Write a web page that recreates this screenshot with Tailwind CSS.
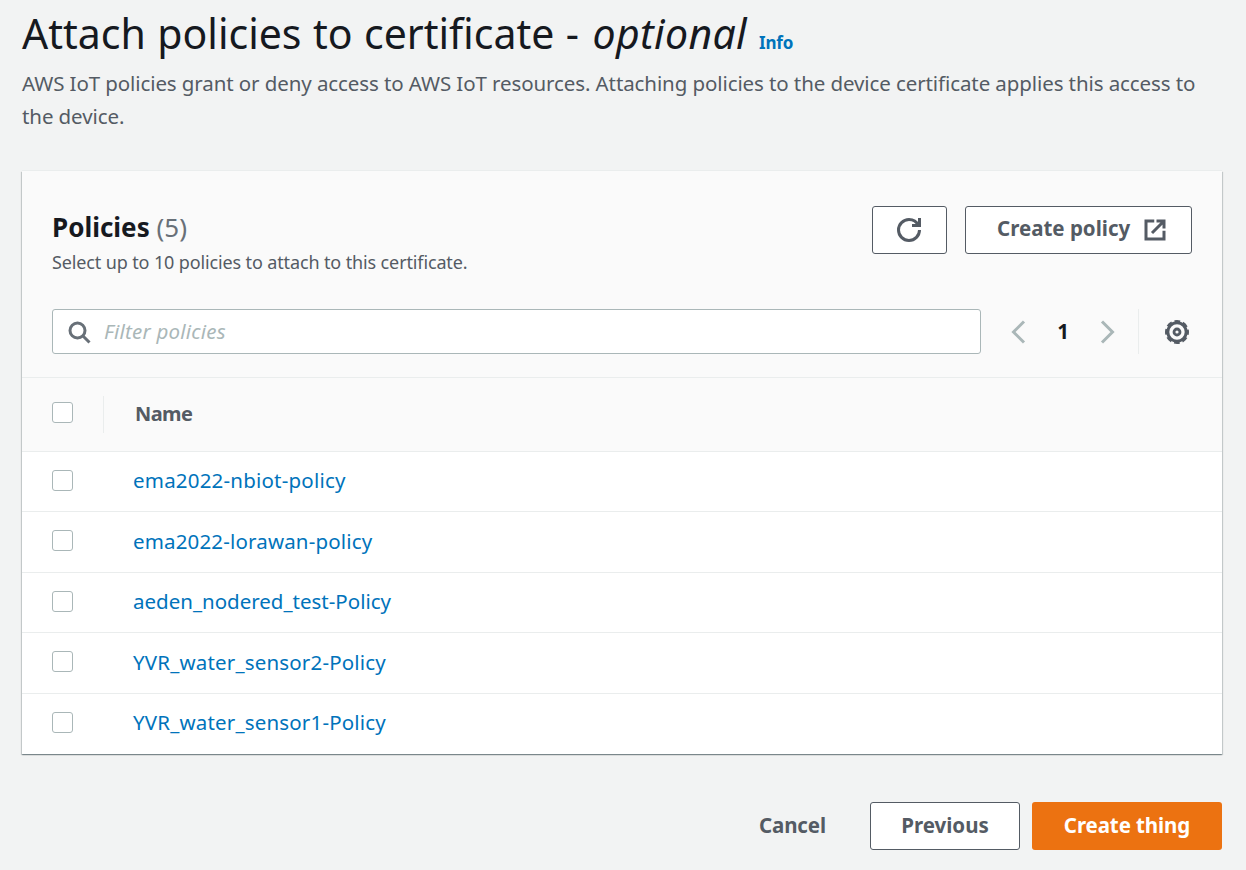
<!DOCTYPE html>
<html lang="en">
<head>
<meta charset="utf-8">
<title>Attach policies to certificate</title>
<script src="https://cdn.jsdelivr.net/npm/@tailwindcss/browser@4"></script>
</head>
<body class="h-[870px] overflow-hidden bg-[#f2f3f3] font-['Noto_Sans',sans-serif] text-[20.5px] text-[#545b64]">
<main class="flex flex-col pl-[22px] pr-6">
  <header class="flex h-[171px] flex-col pt-[6px]">
    <div class="flex h-[61px] items-baseline leading-[54px] whitespace-nowrap">
      <h1 class="text-[41px] text-[#16191f]"><span class="[word-spacing:0.8px]">Attach policies to certificate - </span><i class="ml-[2px] tracking-[0.35px]">optional</i></h1>
      <a class="ml-[12px] text-[17px] font-bold tracking-[-0.2px] text-[#0073bb]">Info</a>
    </div>
    <p class="leading-[33px] tracking-[-0.095px] whitespace-nowrap"><span>AWS IoT policies grant or deny access to AWS IoT resources. Attaching policies to the device certificate applies this access to</span><br><span>the device.</span></p>
  </header>

  <section class="flex h-[583px] flex-col bg-white shadow-[0_1px_1px_0_rgba(0,28,36,0.3),1px_1px_1px_0_rgba(0,28,36,0.15),-1px_1px_1px_0_rgba(0,28,36,0.15),0_-1px_0_0_#eaeded]">
    <div class="flex h-[207px] flex-col border-b border-[#eaeded] bg-[#fafafa] px-[30px] pt-[35px]">
      <div class="flex h-[103px] justify-between">
        <div class="pt-[4px] whitespace-nowrap">
          <h2 class="text-[26px] leading-[34px] text-[#687078]"><b class="text-[#16191f]">Policies</b> <span>(5)</span></h2>
          <p class="pt-[5px] text-[18px] leading-[27px] tracking-[-0.13px]">Select up to 10 policies to attach to this certificate.</p>
        </div>
        <div class="flex gap-[18px]">
          <button class="flex h-12 w-[75px] items-center justify-center rounded-[3px] border border-[#545b64] bg-white pr-[2px]">
            <svg class="size-6" viewBox="0 0 16 16" fill="none" stroke="#545b64" stroke-width="2"><path d="M15 8c0 3.87-3.13 7-7 7s-7-3.13-7-7 3.13-7 7-7c2.79 0 5.2 1.63 6.33 4"/><path d="M10 5h5V0"/></svg>
          </button>
          <button class="flex h-12 w-[227px] items-center rounded-[3px] border border-[#545b64] bg-white pl-[31px] font-bold whitespace-nowrap">
            <span class="w-[146px] pb-[3px] text-left">Create policy</span>
            <svg class="size-6" viewBox="0 0 16 16" fill="none" stroke="#545b64" stroke-width="2"><path d="M14 8.500V14H2V2h5.500"/><path d="M9 2h5v5M6 10l7.500-7.500"/></svg>
          </button>
        </div>
      </div>
      <div class="flex h-[45px] items-center">
        <div class="flex h-[45px] w-[929px] items-center rounded-[3px] border border-[#aab7b8] bg-white pl-[14px]">
          <svg class="size-6" viewBox="0 0 16 16" fill="none" stroke="#687078" stroke-width="2"><circle cx="7" cy="7" r="5"/><path d="m15 15-4.500-4.500"/></svg>
          <span class="ml-[13px] tracking-[0.22px] text-[#aab7b8] italic">Filter policies</span>
        </div>
        <svg class="ml-[25px] size-6" viewBox="0 0 16 16" fill="none" stroke="#aab7b8" stroke-width="2"><path d="m12 1-7 7 7 7"/></svg>
        <span class="w-[66px] text-center font-bold text-[#16191f]">1</span>
        <svg class="size-6" viewBox="0 0 16 16" fill="none" stroke="#aab7b8" stroke-width="2"><path d="m4 1 7 7-7 7"/></svg>
        <div class="ml-[18px] h-full w-px bg-[#eaeded]"></div>
        <svg class="ml-[26px] size-6" viewBox="0 0 24 24" fill="none" stroke="#545b64"><circle cx="12" cy="12" r="9.200" stroke-width="3"/><circle cx="12" cy="12" r="10.600" stroke-width="2.800" stroke-dasharray="5.500 2.825" stroke-dashoffset="2.750"/><circle cx="12" cy="12" r="3" stroke-width="2.800"/></svg>
      </div>
    </div>
    <div class="flex h-[74px] items-center border-b border-[#eaeded] bg-[#fafafa] pl-[30px]">
      <div class="mb-[5px] size-[21px] rounded-[3px] border border-[#aab7b8] bg-white"></div>
      <div class="ml-[30px] h-[37px] w-px bg-[#eaeded]"></div>
      <b class="mb-[2px] ml-[31px] text-[20px] tracking-[-0.6px]">Name</b>
    </div>
    <div class="grid flex-1 grid-rows-5 text-[#0073bb]">
      <div class="flex items-center border-b border-[#eaeded] pl-[30px]"><div class="mb-[3px] size-[21px] rounded-[3px] border border-[#aab7b8]"></div><a class="mb-[2px] ml-[60px] tracking-[0.2px]">ema2022-nbiot-policy</a></div>
      <div class="flex items-center border-b border-[#eaeded] pl-[30px]"><div class="mb-[3px] size-[21px] rounded-[3px] border border-[#aab7b8]"></div><a class="mb-[2px] ml-[60px] tracking-[0.16px]">ema2022-lorawan-policy</a></div>
      <div class="flex items-center border-b border-[#eaeded] pl-[30px]"><div class="mb-[2px] size-[21px] rounded-[3px] border border-[#aab7b8]"></div><a class="mb-[2px] ml-[60px]">aeden_nodered_test-Policy</a></div>
      <div class="flex items-center border-b border-[#eaeded] pl-[30px]"><div class="mb-[3px] size-[21px] rounded-[3px] border border-[#aab7b8]"></div><a class="mb-[2px] ml-[60px] tracking-[0.18px]">YVR_water_sensor2-Policy</a></div>
      <div class="flex items-center pl-[30px]"><div class="mb-[3px] size-[21px] rounded-[3px] border border-[#aab7b8]"></div><a class="mb-[2px] ml-[60px] tracking-[0.18px]">YVR_water_sensor1-Policy</a></div>
    </div>
  </section>

  <footer class="mt-12 flex h-12 items-center justify-end font-bold whitespace-nowrap">
    <button class="mr-11 pb-[2px] tracking-[-0.1px]">Cancel</button>
    <button class="mr-3 h-12 w-[150px] rounded-[3px] border border-[#545b64] bg-white pb-[2px]">Previous</button>
    <button class="h-12 w-[190px] rounded-[3px] bg-[#ec7211] pb-[2px] tracking-[-0.1px] text-white">Create thing</button>
  </footer>
</main>
</body>
</html>
